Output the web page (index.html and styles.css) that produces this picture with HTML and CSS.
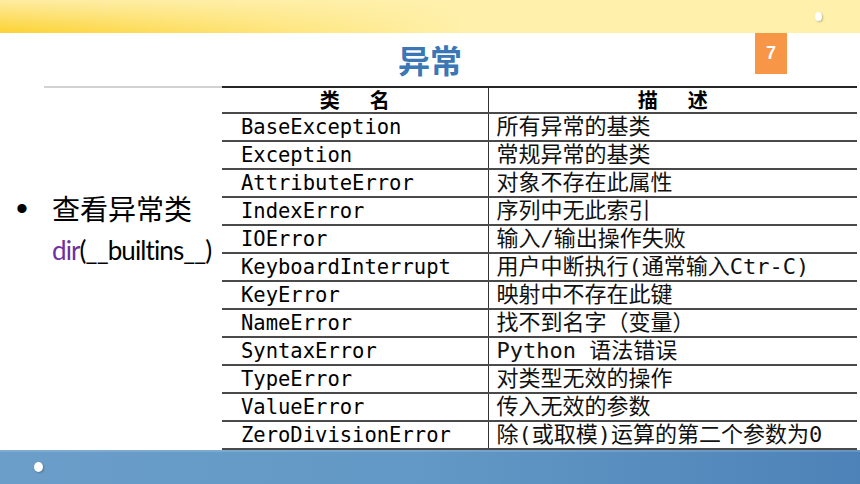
FILE: index.html
```html
<!DOCTYPE html>
<html lang="zh-CN">
<head>
<meta charset="utf-8">
<title>异常</title>
<link rel="stylesheet" href="styles.css">
</head>
<body>
<div class="slide">
  <header class="topband"><span class="dot dot-top"></span></header>
  <div class="titlebar">
    <h1 class="title">异常</h1>
    <div class="pagenum">7</div>
  </div>
  <main class="content">
    <section class="lead">
      <div class="rule"></div>
      <div class="bullet">
        <span class="mark">•</span>
        <div class="btext">
          <p class="bmain">查看异常类</p>
          <p class="bcode"><span class="kw">dir</span>(__builtins__)</p>
        </div>
      </div>
    </section>
    <table class="errtable">
      <thead>
        <tr><th class="c1">类　名</th><th class="c2">描　述</th></tr>
      </thead>
      <tbody>
        <tr><td class="c1">BaseException</td><td class="c2">所有异常的基类</td></tr>
        <tr><td class="c1">Exception</td><td class="c2">常规异常的基类</td></tr>
        <tr><td class="c1">AttributeError</td><td class="c2">对象不存在此属性</td></tr>
        <tr><td class="c1">IndexError</td><td class="c2">序列中无此索引</td></tr>
        <tr><td class="c1">IOError</td><td class="c2">输入/输出操作失败</td></tr>
        <tr><td class="c1">KeyboardInterrupt</td><td class="c2">用户中断执行(通常输入Ctr-C)</td></tr>
        <tr><td class="c1">KeyError</td><td class="c2">映射中不存在此键</td></tr>
        <tr><td class="c1">NameError</td><td class="c2">找不到名字（变量）</td></tr>
        <tr><td class="c1">SyntaxError</td><td class="c2">Python 语法错误</td></tr>
        <tr><td class="c1">TypeError</td><td class="c2">对类型无效的操作</td></tr>
        <tr><td class="c1">ValueError</td><td class="c2">传入无效的参数</td></tr>
        <tr><td class="c1">ZeroDivisionError</td><td class="c2">除(或取模)运算的第二个参数为0</td></tr>
      </tbody>
    </table>
  </main>
  <footer class="bottomband"><span class="dot dot-bottom"></span></footer>
</div>
</body>
</html>
```

FILE: styles.css
```css
* { box-sizing: border-box; }
html, body { margin: 0; padding: 0; }
body { background: #ffffff; font-family: "Noto Sans CJK SC", "DejaVu Sans", sans-serif; color: #000; }

.slide { width: 860px; height: 484px; display: flex; flex-direction: column; overflow: hidden; }

.topband {
  position: relative;
  height: 33px;
  flex: none;
  background:
    linear-gradient(to right, rgba(255,241,172,0) 0%, rgba(255,241,172,0.55) 30%, #fff1ac 55%, #fff1ac 100%),
    linear-gradient(to bottom, #feeca2 0%, #fcd232 100%);
}
.dot { position: absolute; background: #fff; border-radius: 50%; box-shadow: 1px 1px 2px rgba(0,0,0,0.25); }
.dot-top { left: 815px; top: 12px; width: 7px; height: 9px; }
.dot-bottom { left: 34px; top: 12px; width: 9px; height: 10px; }

.titlebar { position: relative; height: 53px; flex: none; display: flex; justify-content: center; }
.title {
  margin: 0;
  padding-top: 7px;
  font-size: 32px;
  line-height: 38px;
  font-weight: 700;
  color: #3a77b4;
}
.pagenum {
  position: absolute;
  left: 755px; top: 0;
  width: 32px; height: 41px;
  background: #f79646;
  color: #fff;
  font-family: "Liberation Sans", Arial, sans-serif;
  font-weight: 700;
  font-size: 18px;
  display: flex; align-items: center; justify-content: center;
}

.content { flex: none; height: 364px; display: flex; }

.lead { width: 222px; flex: none; }
.rule { margin-left: 44px; height: 2px; background: #d2d2d2; }
.bullet { display: flex; padding: 101px 0 0 16px; }
.mark { font-family: "Liberation Sans", Arial, sans-serif; font-size: 34px; line-height: 38px; width: 36px; }
.btext p { margin: 0; }
.bmain { font-size: 28px; line-height: 38px; }
.bcode { font-family: Lato, "Open Sans", sans-serif; font-size: 26px; line-height: 46px; letter-spacing: -0.9px; }
.kw { color: #7030a0; }

.errtable {
  width: 635px;
  border-collapse: collapse;
  border-top: 2px solid #262626;
  font-size: 20px;
}
.errtable th, .errtable td {
  padding: 0;
  height: 28px;
  border-bottom: 2px solid #4a4a4a;
  white-space: nowrap;
  vertical-align: middle;
}
.errtable thead th { height: 26px; font-weight: 600; font-size: 20px; text-align: center; line-height: 24px; letter-spacing: 5px; padding-left: 5px; }
.errtable .c1 { width: 266px; border-right: 1px solid #333; }
.errtable td.c1 {
  padding-left: 19px;
  font-family: "DejaVu Sans Mono", monospace;
  font-size: 20.5px;
  line-height: 26px;
}
.errtable td.c2 {
  padding-left: 8px;
  font-family: "DejaVu Sans Mono", "Noto Sans CJK SC", monospace;
  font-size: 22px;
  line-height: 26px;
  color: #111;
}

.bottomband {
  position: relative;
  flex: 1;
  background: linear-gradient(to right, #6b9ec9 0%, #6298c5 50%, #4d82b8 100%);
  box-shadow: inset 0 2px 1px rgba(255,255,255,0.15);
}
```
